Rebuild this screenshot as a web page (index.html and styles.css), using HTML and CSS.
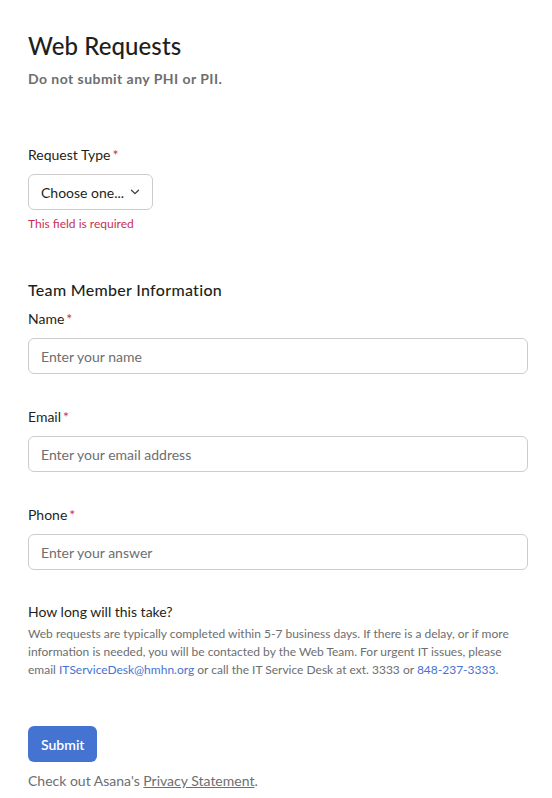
FILE: index.html
```html
<!DOCTYPE html>
<html lang="en">
<head>
<meta charset="utf-8">
<title>Web Requests</title>
<link rel="stylesheet" href="styles.css">
</head>
<body>
<main class="page">
  <h1 class="title">Web Requests</h1>
  <p class="subtitle">Do not submit any PHI or PII.</p>

  <div class="field field-first">
    <label class="label">Request Type<span class="req">*</span></label>
    <button class="select" type="button"><span>Choose one...</span>
      <svg class="chev" width="10" height="6" viewBox="0 0 10 6"><path d="M1.5 1.2 L5 4.6 L8.5 1.2" fill="none" stroke="#3d3d3f" stroke-width="1.3" stroke-linecap="round" stroke-linejoin="round"/></svg>
    </button>
    <div class="error">This field is required</div>
  </div>

  <h2 class="section">Team Member Information</h2>

  <div class="field field-tight">
    <label class="label">Name<span class="req">*</span></label>
    <div class="input">Enter your name</div>
  </div>
  <div class="field">
    <label class="label">Email<span class="req">*</span></label>
    <div class="input">Enter your email address</div>
  </div>
  <div class="field">
    <label class="label">Phone<span class="req">*</span></label>
    <div class="input">Enter your answer</div>
  </div>

  <div class="info">
    <div class="info-title">How long will this take?</div>
    <p class="info-text">Web requests are typically completed within 5-7 business days. If there is a delay, or if more information is needed, you will be contacted by the Web Team. For urgent IT issues, please email <a class="link" href="#">ITServiceDesk@hmhn.org</a> or call the IT Service Desk at ext. 3333 or <a class="link" href="#">848-237-3333</a>.</p>
  </div>

  <button class="submit" type="button">Submit</button>
  <p class="footer">Check out Asana's <a class="privacy" href="#">Privacy Statement</a>.</p>
</main>
</body>
</html>
```
FILE: styles.css
```css
* { box-sizing: border-box; }
html, body { margin: 0; padding: 0; background: #ffffff; }
body {
  font-family: "Lato", "Open Sans", "Liberation Sans", sans-serif;
  color: #1e1f21;
  font-size: 14px;
}
.page {
  padding: 30px 24px 0 28px;
  display: flex;
  flex-direction: column;
  align-items: flex-start;
}
.title {
  margin: 0;
  font-size: 24px;
  line-height: 32px;
  font-weight: 500;
  letter-spacing: 0.1px;
  color: #1e1f21;
}
.subtitle {
  margin: 7px 0 0;
  font-size: 14px;
  line-height: 20px;
  font-weight: 700;
  letter-spacing: 0.45px;
  color: #6d6e6f;
}
.field { display: flex; flex-direction: column; align-items: flex-start; margin-top: 33px; width: 100%; }
.field-first { margin-top: 56px; }
.field-tight { margin-top: 7px; }
.label {
  font-size: 14px;
  line-height: 20px;
  color: #1e1f21;
}
.req { color: #c92f54; margin-left: 2px; }
.select {
  margin-top: 9px;
  height: 36px;
  padding: 0 12px;
  border: 1px solid #cfcbcb;
  border-radius: 6px;
  background: #ffffff;
  font: inherit;
  font-size: 14px;
  color: #1e1f21;
  white-space: nowrap;
  display: flex;
  align-items: center;
}
.chev { margin-left: 6px; }
.error {
  margin-top: 6px;
  font-size: 12px;
  line-height: 16px;
  color: #c92f54;
}
.section {
  margin: 46px 0 0;
  font-size: 16px;
  line-height: 24px;
  font-weight: 500;
  letter-spacing: 0.3px;
  color: #1e1f21;
}
.input {
  margin-top: 9px;
  width: 100%;
  height: 36px;
  border: 1px solid #cfcbcb;
  border-radius: 6px;
  padding: 0 12px;
  display: flex;
  align-items: center;
  font-size: 14px;
  color: #6d6e6f;
}
.info { margin-top: 32px; }
.info-title { font-size: 14px; line-height: 20px; color: #1e1f21; }
.info-text {
  margin: 3px 0 0;
  font-size: 12px;
  line-height: 18px;
  color: #6d6e6f;
}
.link { color: #4573d2; text-decoration: none; }
.submit {
  margin-top: 47px;
  height: 36px;
  padding: 0 13px;
  border: none;
  border-radius: 6px;
  background: #4573d2;
  color: #ffffff;
  font: inherit;
  font-size: 14px;
  font-weight: 600;
}
.footer {
  margin: 9px 0 0;
  font-size: 14px;
  line-height: 20px;
  color: #6d6e6f;
}
.privacy { color: #6d6e6f; text-decoration: underline; }
```
